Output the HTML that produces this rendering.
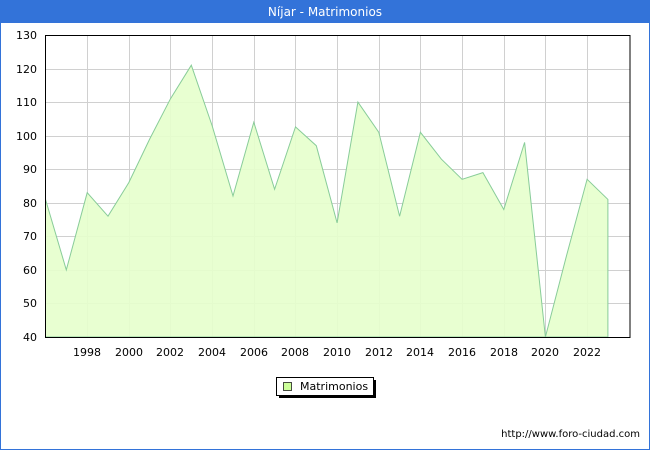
<!DOCTYPE html>
<html><head><meta charset="utf-8"><style>
body{margin:0;width:650px;height:450px;overflow:hidden;background:#fff;font-family:"DejaVu Sans","Liberation Sans",sans-serif;}
</style></head><body>
<svg width="650" height="450" xmlns="http://www.w3.org/2000/svg" font-family="DejaVu Sans, Liberation Sans, sans-serif">
<rect x="0.5" y="0.5" width="649" height="449" fill="#fff" stroke="#3373d9"/>
<rect x="0" y="0" width="650" height="23" fill="#3373d9"/>
<text x="325" y="16" fill="#fff" font-size="12" text-anchor="middle">Níjar - Matrimonios</text>
<g stroke="#d0d0d0" stroke-width="1">
<line x1="45" y1="69.5" x2="630" y2="69.5"/><line x1="45" y1="102.5" x2="630" y2="102.5"/><line x1="45" y1="136.5" x2="630" y2="136.5"/><line x1="45" y1="169.5" x2="630" y2="169.5"/><line x1="45" y1="203.5" x2="630" y2="203.5"/><line x1="45" y1="236.5" x2="630" y2="236.5"/><line x1="45" y1="270.5" x2="630" y2="270.5"/><line x1="45" y1="303.5" x2="630" y2="303.5"/>
<line x1="87.5" y1="35" x2="87.5" y2="337"/><line x1="129.5" y1="35" x2="129.5" y2="337"/><line x1="170.5" y1="35" x2="170.5" y2="337"/><line x1="212.5" y1="35" x2="212.5" y2="337"/><line x1="254.5" y1="35" x2="254.5" y2="337"/><line x1="295.5" y1="35" x2="295.5" y2="337"/><line x1="337.5" y1="35" x2="337.5" y2="337"/><line x1="379.5" y1="35" x2="379.5" y2="337"/><line x1="420.5" y1="35" x2="420.5" y2="337"/><line x1="462.5" y1="35" x2="462.5" y2="337"/><line x1="504.5" y1="35" x2="504.5" y2="337"/><line x1="545.5" y1="35" x2="545.5" y2="337"/><line x1="587.5" y1="35" x2="587.5" y2="337"/>
</g>
<polygon fill="#e5ffcc" fill-opacity="0.9" stroke="#88cc99" stroke-width="1" points="45.5,337 45.5,199.4 66.3,269.9 87.2,192.7 108,216.2 128.8,182.6 149.7,139 170.5,98.7 191.3,65.2 212.1,125.6 233,196 253.8,122.2 274.6,189.3 295.5,126.9 316.3,145.7 337.1,222.9 357.9,102.1 378.8,132.3 399.6,216.2 420.4,132.3 441.3,159.1 462.1,179.3 482.9,172.6 503.8,209.5 524.6,142.4 545.4,337 566.3,256.5 587.1,179.3 607.9,199.4 607.9,337"/>
<rect x="45.5" y="35.5" width="584.5" height="302" fill="none" stroke="#000"/>
<g font-size="11" fill="#000" text-anchor="end">
<text x="37" y="39">130</text><text x="37" y="73">120</text><text x="37" y="106">110</text><text x="37" y="140">100</text><text x="37" y="173">90</text><text x="37" y="207">80</text><text x="37" y="240">70</text><text x="37" y="274">60</text><text x="37" y="307">50</text><text x="37" y="341">40</text>
</g>
<g font-size="11" fill="#000" text-anchor="middle">
<text x="87" y="356">1998</text><text x="129" y="356">2000</text><text x="170" y="356">2002</text><text x="212" y="356">2004</text><text x="254" y="356">2006</text><text x="295" y="356">2008</text><text x="337" y="356">2010</text><text x="379" y="356">2012</text><text x="420" y="356">2014</text><text x="462" y="356">2016</text><text x="504" y="356">2018</text><text x="545" y="356">2020</text><text x="587" y="356">2022</text>
</g>
<rect x="279" y="380" width="97" height="18" fill="#000"/>
<rect x="276.5" y="377.5" width="97" height="18" fill="#fff" stroke="#000"/>
<rect x="283.5" y="382.5" width="8" height="8" fill="#ccff99" stroke="#000" stroke-width="0.7"/>
<text x="300" y="390" font-size="11">Matrimonios</text>
<text x="640" y="437" font-size="10" text-anchor="end">http://www.foro-ciudad.com</text>
</svg>
</body></html>
